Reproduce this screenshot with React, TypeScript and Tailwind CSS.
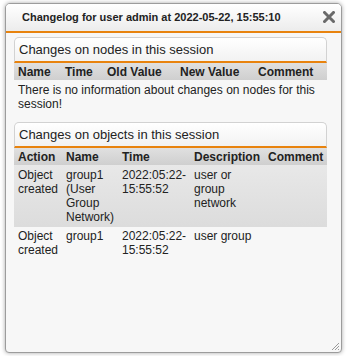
import React from "react";

const font = { fontFamily: '"Liberation Sans", Arial, sans-serif' };

const SectionHeader = ({ title }: { title: string }) => (
  <div className="h-[26px] flex items-center pl-[4px] text-[13px] text-[#222] rounded-t-[5px] border border-b-2 border-[#d2d2d2] border-b-[#e8830e] bg-gradient-to-b from-white to-[#f2f2f2]">
    {title}
  </div>
);

const nodeCols = "grid grid-cols-[47px_42px_73px_78px_73px]";
const objCols = "grid grid-cols-[48px_56px_72px_74px_63px]";

const rows = [
  {
    action: "Object created",
    name: "group1 (User Group Network)",
    time: "2022:05:22-15:55:52",
    desc: "user or group network",
    comment: "",
  },
  {
    action: "Object created",
    name: "group1",
    time: "2022:05:22-15:55:52",
    desc: "user group",
    comment: "",
  },
];

const App = () => {
  return (
    <div className="w-[353px] h-[356px] bg-white pt-[3px] pl-[5px]" style={font}>
      <div className="relative w-[337px] h-[350px] flex flex-col bg-[#f7f7f7] border border-[#9c9c9c] rounded-t-[5px] rounded-b-[4px] overflow-hidden shadow-[0_0_4px_rgba(0,0,0,0.35)]">
        <div className="h-[29px] shrink-0 flex items-center justify-between pl-[16px] pr-[6px] border-b-2 border-[#e8830e] bg-gradient-to-b from-white to-[#ececec]">
          <span className="text-[11px] font-bold text-[#222]">
            Changelog for user admin at 2022-05-22, 15:55:10
          </span>
          <svg width="12" height="12" viewBox="0 0 12 12" className="mb-[1px]">
            <path d="M1.5 1.5 L10.5 10.5 M10.5 1.5 L1.5 10.5" stroke="#6a6a6a" strokeWidth="3" strokeLinecap="square" />
          </svg>
        </div>

        <div className="flex-1 pl-[8px] pt-[4px] text-[12px] text-[#222] leading-[14px]">
          <div className="w-[313px]">
            <SectionHeader title="Changes on nodes in this session" />
            <div className={`${nodeCols} h-[17px] items-center font-bold bg-gradient-to-b from-[#e0e0e0] to-[#cfcfcf]`}>
              {["Name", "Time", "Old Value", "New Value", "Comment"].map((h) => (
                <div key={h} className="pl-[4px] whitespace-nowrap">
                  {h}
                </div>
              ))}
            </div>
            <p className="pl-[4px] pr-[4px] pt-[3px]">
              There is no information about changes on nodes for this session!
            </p>
          </div>

          <div className="w-[313px] mt-[11px]">
            <SectionHeader title="Changes on objects in this session" />
            <div className={`${objCols} h-[17px] items-center font-bold bg-gradient-to-b from-[#e0e0e0] to-[#cfcfcf]`}>
              {["Action", "Name", "Time", "Description", "Comment"].map((h) => (
                <div key={h} className="pl-[4px] whitespace-nowrap">
                  {h}
                </div>
              ))}
            </div>
            {rows.map((r, i) => (
              <div
                key={i}
                className={`${objCols} ${
                  i % 2 === 0
                    ? "pt-[3px] pb-[3px] bg-gradient-to-b from-[#e8e8e8] to-[#dcdcdc]"
                    : "pt-[2px] pb-[3px]"
                }`}
              >
                <div className="pl-[4px] pr-[2px]">{r.action}</div>
                <div className="pl-[4px] pr-[2px]">{r.name}</div>
                <div className="pl-[4px] pr-[2px] break-words">{r.time}</div>
                <div className="pl-[4px] pr-[2px]">{r.desc}</div>
                <div className="pl-[4px] pr-[2px]">{r.comment}</div>
              </div>
            ))}
          </div>
        </div>

        <svg width="9" height="9" viewBox="0 0 9 9" className="absolute right-[1px] bottom-[1px]">
          <path d="M8 1 L1 8 M8 4 L4 8 M8 7 L7 8" stroke="#9a9a9a" strokeWidth="1" />
        </svg>
      </div>
    </div>
  );
};

export default App;
